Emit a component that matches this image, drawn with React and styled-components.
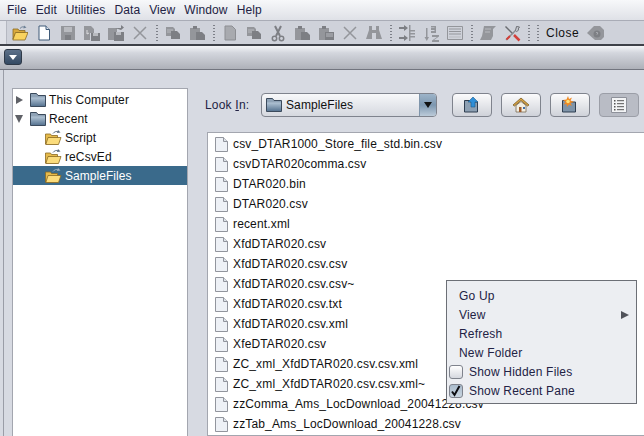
import React from "react";
import styled, { createGlobalStyle } from "styled-components";

const Global = createGlobalStyle`
  html, body { margin: 0; padding: 0; background: #d7dae2; }
  body { font-family: "Liberation Sans", Arial, sans-serif; font-size: 12px; color: #111; }
`;
const Page = styled.div`
  position: relative; width: 644px; height: 436px; overflow: hidden;
  display: flex; flex-direction: column; background: #d7dae2;
`;
const MenuBar = styled.div`
  height: 21px; flex: none; display: flex; align-items: center; padding: 0 0 0 7px; gap: 9px;
  background: linear-gradient(#f7f8fa, #dfe1e7);
  border-bottom: 1px solid #a9acb6; box-sizing: border-box;
`;
const MenuItem = styled.span`
  color: #222244; font-size: 12px; line-height: 20px; letter-spacing: 0.1px;
`;
const ToolBar = styled.div`
  height: 25px; flex: none; display: flex; align-items: center; padding-top: 1px; box-sizing: border-box;
  background: #cfd2da; border-bottom: 2px solid #3e4148;
`;
const Grip = styled.div`
  width: 7px; height: 23px; margin: -1px 1px 0 0; flex: none; box-sizing: border-box;
  background: #e0e2e8; border-right: 1px solid #b5b8c1;
`;
const Slot = styled.div`
  width: 24px; height: 22px; flex: none; display: flex; align-items: center; justify-content: center;
`;
const Sep = styled.div`
  width: 9px; height: 19px; flex: none; position: relative;
  background: radial-gradient(circle, #7d8088 0.6px, transparent 0.7px) center top / 2px 3px repeat-y;
`;
const CloseLabel = styled.span`
  margin: 0 4px 0 4px; color: #111; font-size: 12px; letter-spacing: 0.5px;
`;
const Strip = styled.div`
  height: 24px; flex: none; padding: 3px 0 0 4px; box-sizing: border-box;
  background: linear-gradient(#f5f6f8, #d3d6dd 30%, #aeb1b9);
  border-bottom: 1px solid #72757f;
`;
const CollapseBtn = styled.div`
  width: 18px; height: 16px; border-radius: 3px; border: 1px solid #2f3a48; box-sizing: border-box;
  background: linear-gradient(#5d7189, #344a63);
  display: flex; align-items: center; justify-content: center;
  &::after { content: ""; border-left: 4px solid transparent; border-right: 4px solid transparent; border-top: 5px solid #fff; }
`;
const Main = styled.div`
  flex: 1; min-height: 0; display: flex; margin-left: 3px; border-left: 1px solid #9a9da7;
  padding: 18px 0 0 8px; gap: 20px;
`;
const TreePanel = styled.div`
  width: 176px; flex: none; background: #fff; border: 1px solid #a3a6af; box-sizing: border-box;
  height: 360px; padding-top: 1px;
`;
const TreeRow = styled.div`
  height: 19px; display: flex; align-items: center;
  padding-left: ${p => p.$indent}px;
  background: ${p => (p.$selected ? "#3a6a8b" : "transparent")};
  color: ${p => (p.$selected ? "#fff" : "#111")};
`;
const Expander = styled.span`
  width: 13px; height: 10px; flex: none; display: flex; align-items: center; margin-right: 3px;
  &::after {
    content: ""; display: block;
    ${p => p.$open
      ? "border-left:4px solid transparent;border-right:4px solid transparent;border-top:8px solid #5f6167;margin-left:1px;"
      : "border-top:4px solid transparent;border-bottom:4px solid transparent;border-left:7px solid #5f6167;margin-left:2px;"}
  }
`;
const TreeText = styled.span` margin-left: 3px; letter-spacing: ${p => (p.$tight ? "0.05px" : "0.1px")}; `;
const RightPane = styled.div`
  flex: 1; min-width: 0; display: flex; flex-direction: column;
`;
const LookRow = styled.div`
  height: 24px; margin: 5px 0 15px 0; display: flex; align-items: center; flex: none;
`;
const LookLabel = styled.span`
  width: 56px; margin-left: -3px; flex: none; color: #222244; letter-spacing: 0.2px;
  u { text-decoration: underline; }
`;
const Combo = styled.div`
  width: 176px; height: 24px; flex: none; margin-right: 15px; display: flex; box-sizing: border-box;
  border: 1px solid #7f838d; border-radius: 4px; overflow: hidden;
  background: linear-gradient(#f7f8fa, #d5d8df);
`;
const ComboValue = styled.div`
  flex: 1; display: flex; align-items: center; gap: 4px; padding-left: 4px; letter-spacing: 0.1px;
`;
const ComboArrow = styled.div`
  width: 16px; flex: none; display: flex; align-items: center; justify-content: center;
  border-left: 1px solid #7f95ab; background: linear-gradient(#9db4c9, #7d97b0 50%, #bccbd9);
  &::after { content: ""; border-left: 4px solid transparent; border-right: 4px solid transparent; border-top: 6px solid #111; }
`;
const NavButton = styled.div`
  width: 40px; height: 24px; flex: none; margin-right: 9px; box-sizing: border-box;
  display: flex; align-items: center; justify-content: center;
  border: 1px solid ${p => (p.$pressed ? "#9b9ea7" : "#7f838d")}; border-radius: 4px;
  background: ${p => (p.$pressed ? "#b9bcc5" : "linear-gradient(#fbfbfc, #cfd2d9)")};
`;
const FileList = styled.div`
  flex: 1; background: #fff; border: 1px solid #a3a6af; border-right: none; padding-top: 1px;
  overflow: hidden; min-height: 0; box-sizing: border-box; margin-left: -1px;
`;
const FileRow = styled.div`
  height: 20px; display: flex; align-items: center; padding-left: 6px; gap: 4px; white-space: nowrap;
`;
const FileName = styled.span` color: #111; letter-spacing: 0.15px; `;
const Popup = styled.div`
  position: absolute; left: 446px; top: 280px; width: 191px; height: 124px; box-sizing: border-box;
  border: 1px solid #6c6f76; background: #eceef2; padding-top: 5px;
`;
const PopupItem = styled.div`
  height: 19px; display: flex; align-items: center; justify-content: space-between;
  padding: 0 7px 0 12px; color: #222244; letter-spacing: 0.2px;
  &[data-arrow]::after { content: ""; border-top: 4px solid transparent; border-bottom: 4px solid transparent; border-left: 8px solid #50525a; }
`;
const CheckItem = styled.div`
  height: 19px; display: flex; align-items: center; gap: 6px; padding-left: 2px; color: #222244; letter-spacing: 0.2px;
`;
const CheckBox = styled.div`
  width: 14px; height: 14px; flex: none; box-sizing: border-box; border: 1px solid #7f838d; border-radius: 3px;
  background: ${p => p.$checked ? "linear-gradient(#a9bbcc,#c9d5e0)" : "linear-gradient(#fff,#d5d8df)"};
  display: flex; align-items: center; justify-content: center;
`;

const GRAY = "#94969b";
const DARK = "#7d7f84";
const LITE = "#b9bbc0";
const Gray = ({ children }) => <svg width="16" height="16" viewBox="0 0 16 16" fill={GRAY}>{children}</svg>;

const OpenIcon = () => (
  <svg width="16" height="16" viewBox="0 0 16 16">
    <path d="M1 4h5l1 1.500h6v2H4L1 14z" fill="#d9a93c" stroke="#8a6a22" strokeWidth=".8" />
    <path d="M3.500 7.500H16L13 15H.8z" fill="#f9d35f" stroke="#8a6a22" strokeWidth=".8" />
    <path d="M8 3.500c1.500-2 3.500-2 5-1" stroke="#6c7f95" fill="none" />
    <path d="M12 .5l2.500 2-3 1z" fill="#6c7f95" />
  </svg>
);
const NewIcon = () => (
  <svg width="14" height="16" viewBox="0 0 14 16">
    <path d="M2 1h7l3.500 3.500V15H2z" fill="#fff" stroke="#3f5a78" />
    <path d="M9 1v3.500h3.500" fill="#dfe5ee" stroke="#3f5a78" />
  </svg>
);
const SaveIcon = () => <Gray><path d="M1 1h14v14H1z" /><path d="M4 2h8v5H4z" fill={LITE} /><path d="M5 10h6v5H5z" fill={DARK} /></Gray>;
const SaveAsIcon = () => <Gray><path d="M0 1h7l3 3v4H6v7H0z" /><path d="M7 8h9v8H7z" fill={DARK} /><path d="M9 8h5v3H9z" fill={LITE} /><path d="M3 5v4l2-1" stroke="#dcdde0" fill="none" /></Gray>;
const ExportIcon = () => <Gray><path d="M0 3h9v4H6v8H0z" /><path d="M6 7h10v9H6z" fill={DARK} /><path d="M8 7h5v3H8z" fill={LITE} /><path d="M7 3h6V0l3 2.500-3 2.500z" fill={DARK} /></Gray>;
const XIcon = () => <svg width="16" height="16" viewBox="0 0 16 16"><path d="M2 2l12 12M14 2L2 14" stroke={GRAY} strokeWidth="1.500" /></svg>;
const CopyIcon = () => <Gray><path d="M1 2h7l2 2v7H1z" /><path d="M6 6h6l3 3v5H6z" fill={DARK} /><path d="M2 5h6M2 7h4" stroke={LITE} /></Gray>;
const PasteIcon = () => <Gray><path d="M1 3h10v12H1z" /><path d="M4 1h4v3H4z" fill={DARK} /><path d="M7 7h6l3 3v5H7z" fill={DARK} /></Gray>;
const PageIcon = () => <Gray><path d="M3 1h7l3.500 3.500V15H3z" fill="#a8aaaf" stroke="#8c8e93" /></Gray>;
const CutIcon = () => (
  <svg width="14" height="17" viewBox="0 0 14 17" fill="none" stroke={DARK} strokeWidth="1.500">
    <path d="M4 1l5 10M10 1L5 11" strokeWidth="2" /><circle cx="3.500" cy="13.500" r="2.200" /><circle cx="10.500" cy="13.500" r="2.200" />
  </svg>
);
const Paste2Icon = () => <Gray><path d="M1 3h10v12H1z" /><path d="M4 1h4v3H4z" fill={DARK} /><path d="M7 7h9v8H7z" fill={DARK} /><path d="M8 9h7M8 11h7" stroke={LITE} /></Gray>;
const BinocIcon = () => <Gray><path d="M3 1h3v4h4V1h3v4l3 9h-6V8H6v6H0l3-9z" /></Gray>;
const AlignIcon = () => <Gray><path d="M0 2h5V0l4 3-4 3V4H0zM0 12h5v-2l4 3-4 3v-2H0z" fill={DARK} /><path d="M10 5h6v1.500h-6zM10 8h6v1.500h-6zM10 11h6v1.500h-6zM10 0h1.500v16H10z" /></Gray>;
const SortIcon = () => (
  <svg width="17" height="17" viewBox="0 0 17 17" fill={GRAY}>
    <path d="M3 3h1.500v9H6l-2.200 4L1.500 12H3z" />
    <path d="M8 1h5v7H8V6h3.500V5H8V3h3.500V2.500H8z" /><path d="M9 10h7v1.500L11 15h5v2H9v-1.500L14 12H9z" />
  </svg>
);
const ListIcon = () => <Gray><path d="M.5 1.500h15v13H.5z" fill="none" stroke={GRAY} /><path d="M2 4h12M2 6.500h12M2 9h12" stroke={GRAY} /><path d="M2 12h12" stroke={LITE} /></Gray>;
const ScrollIcon = () => <Gray><path d="M4 1h12l-3 3v7l-2 4H0l2-4z" /><path d="M5 4h6M5 7h5" stroke={LITE} /></Gray>;
const ToolsIcon = () => (
  <svg width="17" height="17" viewBox="0 0 17 17" fill="none">
    <path d="M1.500 1.500L9 9" stroke="#6a6c71" strokeWidth="1.500" />
    <path d="M10 10l5.500 5.500" stroke="#d2403a" strokeWidth="2.500" />
    <path d="M2 15L11.500 5.500" stroke="#8a8c91" strokeWidth="1.500" />
    <path d="M2.500 14.500L6 11" stroke="#d2403a" strokeWidth="2" />
    <path d="M11.500 5.500L12.500 1.500l3 .5-1.500 2 .7 1-2 1.500z" stroke="#6a6c71" />
  </svg>
);
const HelpIcon = () => (
  <svg width="17" height="16" viewBox="0 0 17 16">
    <path d="M0 8L7 1h6l4 4v7l-3 3H8z" fill={GRAY} />
    <circle cx="10" cy="9" r="3.500" fill={DARK} />
    <path d="M9 8c.5-1 2.200-.5 1.500.5L10 9.500" stroke={LITE} fill="none" />
  </svg>
);
const BlueFolder = () => (
  <svg width="16" height="16" viewBox="0 0 16 16">
    <defs><linearGradient id="bf" x1="0" y1="0" x2="0" y2="1"><stop offset="0" stopColor="#b3c5d6" /><stop offset="1" stopColor="#587592" /></linearGradient></defs>
    <path d="M.5 1.500h6l1.500 2h7.500v11H.5z" fill="#8fa3b7" stroke="#3b4a5c" />
    <path d="M1 5.500h14V14H1z" fill="url(#bf)" />
  </svg>
);
const RecentFolder = ({ muted }) => (
  <svg width="17" height="17" viewBox="0 0 17 17">
    <path d="M.5 5h5l1 1.500h6V15H.5z" fill="#e6bb4c" stroke="#8a6a22" strokeWidth=".8" />
    <path d="M3 8.500h13L13.500 15.500H.8z" fill="#fbdc7c" stroke="#8a6a22" strokeWidth=".8" />
    <path d="M8 4.500c1.500-2 3.500-2.500 5-1.500" stroke={muted ? "#9db0c2" : "#56687c"} fill="none" />
    <path d="M13 1l2.500 2.500-3.500.5z" fill={muted ? "#9db0c2" : "#56687c"} />
  </svg>
);
const FileIcon = () => (
  <svg width="15" height="17" viewBox="0 0 15 17">
    <path d="M1.500 1.500h8l4 4v10h-12z" fill="#eef1f6" stroke="#92959d" />
    <path d="M9.500 1.500v4h4" fill="#dfe3e9" stroke="#92959d" />
  </svg>
);
const UpIcon = () => (
  <svg width="18" height="18" viewBox="0 0 18 18">
    <path d="M1.500 4.500h5l1 1.500h7v10h-13z" fill="#8da0b3" stroke="#2f3e50" />
    <path d="M10 1l5 5h-3v5H8V6H5z" fill="#2f8fd8" stroke="#1d5a8c" strokeWidth=".6" />
  </svg>
);
const HomeIcon = () => (
  <svg width="18" height="18" viewBox="0 0 18 18">
    <path d="M1 9l8-7 8 7-1.500 1L9 4.500 2.500 10z" fill="#d7a344" stroke="#7a5a20" strokeWidth=".8" />
    <path d="M4 9.500L9 5.500l5 4V16H4z" fill="#f3efe2" stroke="#7a6a50" strokeWidth=".8" />
    <path d="M7 11h2.500v5H7z" fill="#a05a2a" /><path d="M11 11h2v2h-2z" fill="#3f6fa8" />
  </svg>
);
const NewFolderIcon = () => (
  <svg width="18" height="18" viewBox="0 0 18 18">
    <path d="M1.500 4.500h5l1 1.500h7v10h-13z" fill="#7f94a9" stroke="#2f3e50" />
    <path d="M7 0l1 3 3-1.500L9.500 4.500 13 6 9.500 7 11 10 8 8.500 6 11 5.500 8 2.500 8.500 4.500 6 2 4l3.500-.5z" fill="#f08a24" />
    <circle cx="7" cy="5.500" r="1.800" fill="#fde27a" />
  </svg>
);
const DetailIcon = () => (
  <svg width="16" height="16" viewBox="0 0 16 16">
    <path d="M.5.500h15v15H.5z" fill="#f3f4f6" stroke="#8e919a" />
    <path d="M3 3h1.500v1.500H3zM3 6h1.500v1.500H3zM3 9h1.500v1.500H3zM3 12h1.500v1.500H3z" fill="#555" />
    <path d="M6 3.700h7M6 6.700h7M6 9.700h7M6 12.700h7" stroke="#555" />
  </svg>
);
const CheckMark = () => <svg width="12" height="12" viewBox="0 0 12 12"><path d="M2 6.500L4.500 10 9.500 1" fill="none" stroke="#0c0c10" strokeWidth="2" /></svg>;

const menus = ["File", "Edit", "Utilities", "Data", "View", "Window", "Help"];
const files = [
  "csv_DTAR1000_Store_file_std.bin.csv", "csvDTAR020comma.csv", "DTAR020.bin", "DTAR020.csv", "recent.xml",
  "XfdDTAR020.csv", "XfdDTAR020.csv.csv", "XfdDTAR020.csv.csv~", "XfdDTAR020.csv.txt", "XfdDTAR020.csv.xml",
  "XfeDTAR020.csv", "ZC_xml_XfdDTAR020.csv.csv.xml", "ZC_xml_XfdDTAR020.csv.csv.xml~",
  "zzComma_Ams_LocDownload_20041228.csv", "zzTab_Ams_LocDownload_20041228.csv",
];
const group = icons => icons.map((I, i) => <Slot key={i}><I /></Slot>);

export default function App() {
  return (
    <Page>
      <Global />
      <MenuBar>{menus.map(m => <MenuItem key={m}>{m}</MenuItem>)}</MenuBar>
      <ToolBar>
        <Grip />
        {group([OpenIcon, NewIcon, SaveIcon, SaveAsIcon, ExportIcon, XIcon])}
        <Sep />
        {group([CopyIcon, PasteIcon])}
        <Sep />
        {group([PageIcon, CopyIcon, CutIcon, PasteIcon, Paste2Icon, XIcon, BinocIcon])}
        <Sep />
        {group([AlignIcon, SortIcon, ListIcon])}
        <Sep />
        {group([ScrollIcon, ToolsIcon])}
        <Sep /><Sep />
        <CloseLabel>Close</CloseLabel>
        <Slot><HelpIcon /></Slot>
      </ToolBar>
      <Strip><CollapseBtn /></Strip>
      <Main>
        <TreePanel>
          <TreeRow $indent={1}><Expander /><BlueFolder /><TreeText>This Computer</TreeText></TreeRow>
          <TreeRow $indent={1}><Expander $open /><BlueFolder /><TreeText>Recent</TreeText></TreeRow>
          <TreeRow $indent={32}><RecentFolder /><TreeText>Script</TreeText></TreeRow>
          <TreeRow $indent={32}><RecentFolder /><TreeText>reCsvEd</TreeText></TreeRow>
          <TreeRow $indent={32} $selected><RecentFolder muted /><TreeText $tight>SampleFiles</TreeText></TreeRow>
        </TreePanel>
        <RightPane>
          <LookRow>
            <LookLabel>Look <u>I</u>n:</LookLabel>
            <Combo>
              <ComboValue><BlueFolder />SampleFiles</ComboValue>
              <ComboArrow />
            </Combo>
            <NavButton><UpIcon /></NavButton>
            <NavButton><HomeIcon /></NavButton>
            <NavButton><NewFolderIcon /></NavButton>
            <NavButton $pressed><DetailIcon /></NavButton>
          </LookRow>
          <FileList>
            {files.map(f => <FileRow key={f}><FileIcon /><FileName>{f}</FileName></FileRow>)}
            <FileRow><FileIcon /></FileRow>
          </FileList>
        </RightPane>
      </Main>
      <Popup>
        <PopupItem>Go Up</PopupItem>
        <PopupItem data-arrow>View</PopupItem>
        <PopupItem>Refresh</PopupItem>
        <PopupItem>New Folder</PopupItem>
        <CheckItem><CheckBox />Show Hidden Files</CheckItem>
        <CheckItem><CheckBox $checked><CheckMark /></CheckBox>Show Recent Pane</CheckItem>
      </Popup>
    </Page>
  );
}
